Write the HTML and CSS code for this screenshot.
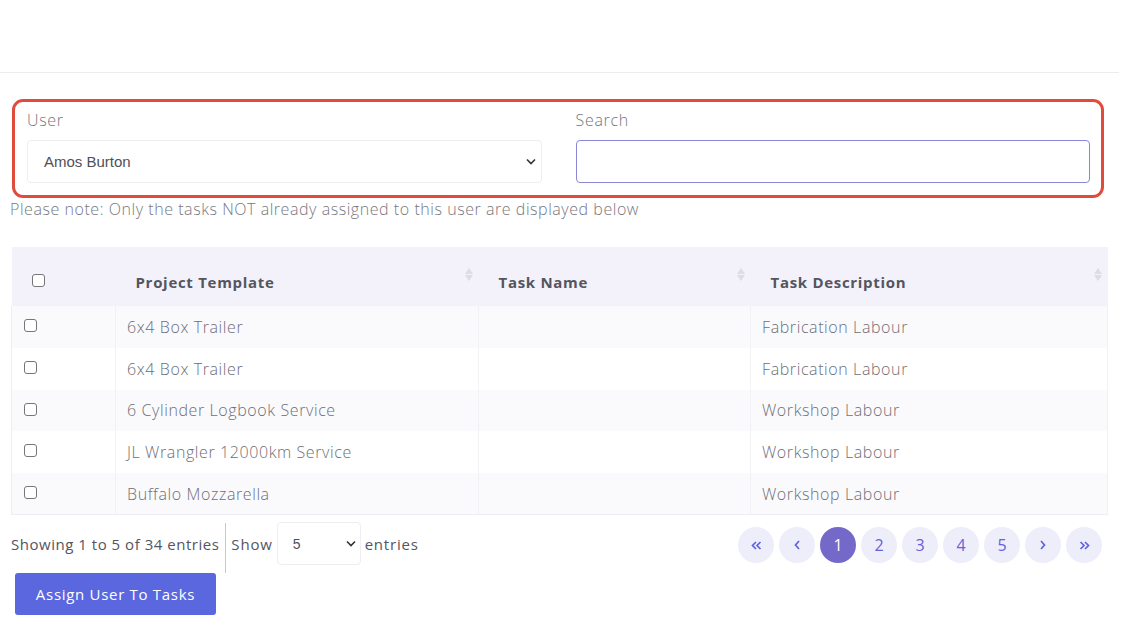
FILE: index.html
```html
<!DOCTYPE html>
<html>
<head>
<meta charset="utf-8">
<link rel="stylesheet" href="styles.css">
</head>
<body>
<div class="topbar"></div>
<div class="content">
  <div class="filter-box">
    <div class="field">
      <label class="lbl">User</label>
      <div class="select-wrap">
        <span class="select-text">Amos Burton</span>
        <svg class="chev" width="10" height="7" viewBox="0 0 10 7"><path d="M1 1.5 L5 5.5 L9 1.5" fill="none" stroke="#333" stroke-width="1.6"/></svg>
      </div>
    </div>
    <div class="field">
      <label class="lbl">Search</label>
      <div class="search-input"></div>
    </div>
  </div>
  <p class="note">Please note: Only the tasks NOT already assigned to this user are displayed below</p>

  <table class="tbl">
    <thead>
      <tr>
        <th class="c1"><span class="cb cb-h"></span></th>
        <th class="c2">Project Template<span class="sort"><i class="up"></i><i class="dn"></i></span></th>
        <th class="c3">Task Name<span class="sort"><i class="up"></i><i class="dn"></i></span></th>
        <th class="c4">Task Description<span class="sort"><i class="up"></i><i class="dn"></i></span></th>
      </tr>
    </thead>
    <tbody>
      <tr class="odd"><td class="c1"><span class="cb"></span></td><td class="c2">6x4 Box Trailer</td><td class="c3"></td><td class="c4">Fabrication Labour</td></tr>
      <tr><td class="c1"><span class="cb"></span></td><td class="c2">6x4 Box Trailer</td><td class="c3"></td><td class="c4">Fabrication Labour</td></tr>
      <tr class="odd"><td class="c1"><span class="cb"></span></td><td class="c2">6 Cylinder Logbook Service</td><td class="c3"></td><td class="c4">Workshop Labour</td></tr>
      <tr><td class="c1"><span class="cb"></span></td><td class="c2">JL Wrangler 12000km Service</td><td class="c3"></td><td class="c4">Workshop Labour</td></tr>
      <tr class="odd"><td class="c1"><span class="cb"></span></td><td class="c2">Buffalo Mozzarella</td><td class="c3"></td><td class="c4">Workshop Labour</td></tr>
    </tbody>
  </table>

  <div class="footer">
    <div class="left">
      <div class="info">
        <span class="showing">Showing 1 to 5 of 34 entries</span>
        <button class="assign">Assign User To Tasks</button>
      </div>
      <div class="divider"></div>
      <div class="len">
        <span class="show">Show</span>
        <div class="len-select"><span>5</span>
          <svg class="chev" width="10" height="7" viewBox="0 0 10 7"><path d="M1 1.5 L5 5.5 L9 1.5" fill="none" stroke="#333" stroke-width="1.6"/></svg>
        </div>
        <span class="show">entries</span>
      </div>
    </div>
    <div class="pager">
      <span class="pg"><svg width="11" height="9" viewBox="0 0 11 9"><path d="M5 1 L1.5 4.5 L5 8 M9.5 1 L6 4.5 L9.5 8" fill="none" stroke="#5f63e0" stroke-width="1.7"/></svg></span>
      <span class="pg"><svg width="6" height="10" viewBox="0 0 6 10"><path d="M5 1 L1.5 5 L5 9" fill="none" stroke="#5f63e0" stroke-width="1.7"/></svg></span>
      <span class="pg active">1</span>
      <span class="pg">2</span>
      <span class="pg">3</span>
      <span class="pg">4</span>
      <span class="pg">5</span>
      <span class="pg"><svg width="6" height="10" viewBox="0 0 6 10"><path d="M1 1 L4.5 5 L1 9" fill="none" stroke="#5f63e0" stroke-width="1.7"/></svg></span>
      <span class="pg"><svg width="11" height="9" viewBox="0 0 11 9"><path d="M1.5 1 L5 4.5 L1.5 8 M6 1 L9.5 4.5 L6 8" fill="none" stroke="#5f63e0" stroke-width="1.7"/></svg></span>
    </div>
  </div>
</div>
</body>
</html>
```

FILE: styles.css
```css
* { box-sizing: border-box; }
body {
  margin: 0;
  font-family: "Open Sans", "Liberation Sans", sans-serif;
  background: #fff;
  color: #6e6e76;
}
.topbar {
  height: 73px;
  border-bottom: 1px solid #ececf0;
  width: 1119px;
}
.content {
  padding: 26px 13px 0 11px;
}
.filter-box {
  margin-left: 1px;
  width: 1092px;
  height: 99px;
  border: 3px solid #e04b3b;
  border-radius: 11px;
  display: flex;
  gap: 34px;
  padding: 7px 11px 0 12px;
}
.field { flex: 1; display: flex; flex-direction: column; }
.lbl {
  font-size: 16px;
  letter-spacing: 0.7px;
  color: #76767e;
  height: 31px;
  line-height: 22px;
  font-weight: 300;
}
.select-wrap {
  height: 43px;
  border: 1px solid #eeeef2;
  border-radius: 4px;
  display: flex;
  align-items: center;
  justify-content: space-between;
  padding: 0 5px 0 16px;
}
.select-text {
  font-family: "Liberation Sans", Arial, sans-serif;
  font-size: 15px;
  color: #4f4f57;
}
.search-input {
  height: 43px;
  border: 1px solid #8b86d6;
  border-radius: 4px;
}
.note {
  margin: 1px 0 0 -1px;
  font-size: 16px;
  letter-spacing: 0.55px;
  color: #77777f;
  font-weight: 300;
  line-height: 20px;
}
.tbl {
  margin-top: 28px;
  width: 1097px;
  border-collapse: collapse;
  font-size: 15px;
}
.tbl thead tr { background: #f3f2fb; height: 59px; }
.tbl th {
  text-align: left;
  font-weight: 700;
  color: #55555e;
  position: relative;
  padding-top: 11px;
  letter-spacing: 0.7px;
}
.tbl th.c2 { padding-left: 20px; }
.tbl th.c3 { padding-left: 20px; }
.tbl th.c4 { padding-left: 20px; }
.tbl th.c1 { padding-left: 20px; padding-top: 10px; }
.sort {
  position: absolute;
  right: 6px;
  top: 21px;
  display: flex;
  flex-direction: column;
  gap: 1px;
}
.sort i {
  width: 0; height: 0;
  border-left: 4px solid transparent;
  border-right: 4px solid transparent;
}
.sort .up { border-bottom: 6px solid #dcdce2; }
.sort .dn { border-top: 6px solid #dcdce2; }
.tbl td {
  height: 41.8px;
  padding: 0 11px;
  color: #6e6e76;
  font-weight: 300;
  font-size: 16px;
  letter-spacing: 0.6px;
  border-left: 1px solid #f1f1f6;
}
.tbl td.c1 { border-left: 1px solid #eeeef5; padding-left: 12px; vertical-align: top; padding-top: 9px; }
.tbl tbody tr:last-child td { border-bottom: 1px solid #eeeef5; }
.tbl tr td.c4 { border-right: 1px solid #f1f1f6; }
.tbl tbody tr { background: #fff; }
.tbl tbody tr.odd { background: #fafafd; }
.c1 { width: 104px; }
.c2 { width: 363px; }
.c3 { width: 272px; }
.cb {
  display: inline-block;
  width: 13px; height: 13px;
  border: 1px solid #767676;
  border-radius: 3px;
  background: #fff;
}
.footer {
  display: flex;
  justify-content: space-between;
  margin-top: 7px;
}
.left { display: flex; }
.info { display: flex; flex-direction: column; align-items: flex-start; }
.showing {
  font-size: 15px;
  letter-spacing: 0.52px;
  color: #55555e;
  font-weight: 400;
  height: 44px;
  line-height: 44px;
}
.assign {
  margin-top: 7px;
  margin-left: 4px;
  width: 201px;
  height: 42px;
  background: #5a67de;
  color: #fff;
  border: none;
  border-radius: 3px;
  font-family: inherit;
  font-size: 15px;
  letter-spacing: 0.7px;
}
.divider {
  width: 1px;
  height: 50px;
  background: #c8c8cc;
  margin: 1px 5px 0 6px;
}
.len { display: flex; align-items: flex-start; gap: 4px; height: 44px; }
.show { font-size: 15px; letter-spacing: 0.8px; color: #55555e; line-height: 44px; }
.len-select {
  width: 84px;
  height: 43px;
  border: 1px solid #eeeef2;
  border-radius: 4px;
  display: flex;
  align-items: center;
  justify-content: space-between;
  padding: 0 4px 0 15px;
  font-size: 14px;
  font-family: "Liberation Sans", Arial, sans-serif;
  color: #4f4f57;
  margin-left: 0;
}
.pager {
  display: flex;
  gap: 5px;
  margin-top: 5px;
  margin-right: 6px;
}
.pg {
  width: 36px;
  height: 36px;
  border-radius: 50%;
  background: #eeedfa;
  color: #6761d9;
  display: flex;
  align-items: center;
  justify-content: center;
  font-size: 16px;
}
.pg.active { background: #7468c8; color: #fff; }
```
